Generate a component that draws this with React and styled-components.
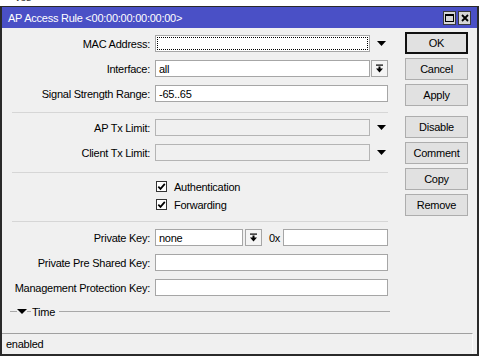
import React from "react";
import styled, { createGlobalStyle } from "styled-components";

const GlobalStyle = createGlobalStyle`
  html, body {
    margin: 0;
    padding: 0;
    background: #ffffff;
  }
  body {
    font-family: "Liberation Sans", Arial, sans-serif;
    font-size: 11px;
    letter-spacing: -0.25px;
    color: #000;
  }
`;

const Page = styled.div`
  width: 481px;
  height: 359px;
  overflow: hidden;
  background: #fff;
`;

const Backdrop = styled.div`
  height: 6px;
  overflow: hidden;
  padding-left: 15px;
`;

const BackdropText = styled.div`
  line-height: 12px;
  margin-top: -9px;
  color: #333;
`;

const Window = styled.div`
  box-sizing: border-box;
  width: 479px;
  height: 350px;
  display: flex;
  flex-direction: column;
  background: #f0f0f0;
  border: 2px solid #2a2a2a;
  border-top-width: 1px;
`;

const TitleBar = styled.div`
  height: 21px;
  flex: none;
  display: flex;
  align-items: center;
  justify-content: space-between;
  padding: 0 6px 0 6px;
  background: #4a50c6;
  color: #fff;
`;

const Title = styled.span`
  font-size: 11px;
`;

const TitleButtons = styled.div`
  display: flex;
  gap: 2px;
`;

const TitleButton = styled.div`
  box-sizing: border-box;
  width: 13px;
  height: 14px;
  display: flex;
  align-items: center;
  justify-content: center;
  background: #d6d6d6;
  border: 1px solid #3a3a3a;
`;

const Body = styled.div`
  flex: 1;
  display: flex;
`;

const Form = styled.div`
  box-sizing: border-box;
  width: 386px;
  padding-left: 10px;
  display: flex;
  flex-direction: column;
`;

const Section = styled.div`
  display: flex;
  flex-direction: column;
  gap: ${(p) => p.$gap}px;
  padding-top: ${(p) => p.$top}px;
  padding-bottom: ${(p) => p.$bottom}px;
  border-bottom: ${(p) => (p.$last ? "none" : "1px solid #d6d6d6")};
`;

const Row = styled.div`
  display: grid;
  grid-template-columns: 138px 1fr;
  column-gap: 5px;
  align-items: center;
  height: ${(p) => p.$h || 17}px;
`;

const Label = styled.span`
  text-align: right;
  white-space: nowrap;
`;

const Fields = styled.div`
  display: flex;
  align-items: center;
  height: 100%;
`;

const Input = styled.div`
  box-sizing: border-box;
  flex: ${(p) => (p.$w ? "none" : "1")};
  width: ${(p) => (p.$w ? `${p.$w}px` : "auto")};
  height: 17px;
  display: flex;
  align-items: center;
  padding: 0 3px;
  background: ${(p) => (p.$disabled ? "#f0f0f0" : "#fff")};
  border: 1px solid ${(p) => (p.$disabled ? "#b4b4b4" : "#a6a6a6")};
  outline: ${(p) => (p.$focus ? "1px dotted #000" : "none")};
  outline-offset: -3px;
  white-space: nowrap;
`;

const ArrowSlot = styled.div`
  box-sizing: border-box;
  width: 18px;
  height: 17px;
  display: flex;
  align-items: center;
  padding-left: 7px;
`;

const ComboButton = styled.div`
  box-sizing: border-box;
  flex: none;
  width: 17px;
  height: 17px;
  margin-left: ${(p) => p.$ml || 1}px;
  display: flex;
  align-items: center;
  justify-content: center;
  background: #f4f4f4;
  border: 1px solid #a6a6a6;
`;

const Hex = styled.span`
  margin: 0 3px 0 7px;
`;

const Check = styled.div`
  display: flex;
  align-items: center;
  gap: 7px;
  padding-left: 1px;
`;

const Box = styled.span`
  box-sizing: border-box;
  width: 11px;
  height: 11px;
  display: flex;
  align-items: center;
  justify-content: center;
  background: #fff;
  border: 1px solid #333;
`;

const TimeRow = styled.div`
  display: flex;
  align-items: center;
  height: 13px;
  margin: 9px -2px 0 -2px;
`;

const Rule = styled.span`
  height: 1px;
  background: #a8a8a8;
  flex: ${(p) => (p.$w ? "none" : "1")};
  width: ${(p) => (p.$w ? `${p.$w}px` : "auto")};
`;

const TimeText = styled.span`
  margin: 0 4px 0 1px;
`;

const Actions = styled.div`
  margin-left: 17px;
  padding-top: 4px;
  width: 63px;
  display: flex;
  flex-direction: column;
  gap: 4px;
`;

const Button = styled.div`
  box-sizing: border-box;
  height: 22px;
  display: flex;
  align-items: center;
  justify-content: center;
  background: #e1e1e1;
  border: 1px solid ${(p) => (p.$default ? "#111" : "#adadad")};
  box-shadow: ${(p) => (p.$default ? "inset 0 0 0 1px #111" : "none")};
  margin-top: ${(p) => p.$mt || 0}px;
`;

const StatusBar = styled.div`
  box-sizing: border-box;
  height: 21px;
  flex: none;
  margin-right: 4px;
  display: flex;
  align-items: center;
  padding-left: 4px;
  border-top: 1px solid #a0a0a0;
  border-right: 1px solid #fafafa;
`;

const DropArrow = () => (
  <svg width="9" height="5" viewBox="0 0 9 5">
    <polygon points="0,0 9,0 4.5,5" fill="#000" />
  </svg>
);

const BarArrow = () => (
  <svg width="9" height="9" viewBox="0 0 9 9">
    <rect x="1" y="0.5" width="7" height="1.2" fill="#000" />
    <rect x="3.5" y="2.5" width="2" height="2.5" fill="#000" />
    <polygon points="1,4.5 8,4.5 4.5,8.5" fill="#000" />
  </svg>
);

const CheckMark = () => (
  <svg width="9" height="9" viewBox="0 0 9 9">
    <path d="M1.3 4.6 L3.5 6.9 L7.8 1.9" stroke="#000" strokeWidth="1.7" fill="none" />
  </svg>
);

const MaxIcon = () => (
  <svg width="9" height="8" viewBox="0 0 9 8">
    <rect x="0.5" y="0.5" width="8" height="7" fill="none" stroke="#000" strokeWidth="1" />
    <rect x="0" y="0" width="9" height="2" fill="#000" />
  </svg>
);

const CloseIcon = () => (
  <svg width="8" height="8" viewBox="0 0 8 8">
    <path d="M1 1 L7 7 M7 1 L1 7" stroke="#000" strokeWidth="1.8" />
  </svg>
);

const CheckRow = ({ label }) => (
  <Row $h={13}>
    <span />
    <Check>
      <Box>
        <CheckMark />
      </Box>
      <span>{label}</span>
    </Check>
  </Row>
);

export default function App() {
  return (
    <>
      <GlobalStyle />
      <Page>
        <Backdrop>
          <BackdropText>ves</BackdropText>
        </Backdrop>
        <Window>
          <TitleBar>
            <Title>AP Access Rule &lt;00:00:00:00:00:00&gt;</Title>
            <TitleButtons>
              <TitleButton>
                <MaxIcon />
              </TitleButton>
              <TitleButton>
                <CloseIcon />
              </TitleButton>
            </TitleButtons>
          </TitleBar>
          <Body>
            <Form>
              <Section $top={7} $bottom={10} $gap={8}>
                <Row>
                  <Label>MAC Address:</Label>
                  <Fields>
                    <Input $focus />
                    <ArrowSlot>
                      <DropArrow />
                    </ArrowSlot>
                  </Fields>
                </Row>
                <Row>
                  <Label>Interface:</Label>
                  <Fields>
                    <Input>all</Input>
                    <ComboButton>
                      <BarArrow />
                    </ComboButton>
                  </Fields>
                </Row>
                <Row>
                  <Label>Signal Strength Range:</Label>
                  <Fields>
                    <Input>-65..65</Input>
                  </Fields>
                </Row>
              </Section>
              <Section $top={6} $bottom={11} $gap={8}>
                <Row>
                  <Label>AP Tx Limit:</Label>
                  <Fields>
                    <Input $disabled />
                    <ArrowSlot>
                      <DropArrow />
                    </ArrowSlot>
                  </Fields>
                </Row>
                <Row>
                  <Label>Client Tx Limit:</Label>
                  <Fields>
                    <Input $disabled />
                    <ArrowSlot>
                      <DropArrow />
                    </ArrowSlot>
                  </Fields>
                </Row>
              </Section>
              <Section $top={7} $bottom={10} $gap={5}>
                <CheckRow label="Authentication" />
                <CheckRow label="Forwarding" />
              </Section>
              <Section $top={7} $bottom={0} $gap={8} $last>
                <Row>
                  <Label>Private Key:</Label>
                  <Fields>
                    <Input $w={88}>none</Input>
                    <ComboButton $ml={2}>
                      <BarArrow />
                    </ComboButton>
                    <Hex>0x</Hex>
                    <Input />
                  </Fields>
                </Row>
                <Row>
                  <Label>Private Pre Shared Key:</Label>
                  <Fields>
                    <Input />
                  </Fields>
                </Row>
                <Row>
                  <Label>Management Protection Key:</Label>
                  <Fields>
                    <Input />
                  </Fields>
                </Row>
              </Section>
              <TimeRow>
                <Rule $w={7} />
                <svg width="10" height="5" viewBox="0 0 10 5">
                  <polygon points="0,0 10,0 5,5" fill="#000" />
                </svg>
                <Rule $w={4} />
                <TimeText>Time</TimeText>
                <Rule />
              </TimeRow>
            </Form>
            <Actions>
              <Button $default>OK</Button>
              <Button>Cancel</Button>
              <Button>Apply</Button>
              <Button $mt={6}>Disable</Button>
              <Button>Comment</Button>
              <Button>Copy</Button>
              <Button>Remove</Button>
            </Actions>
          </Body>
          <StatusBar>enabled</StatusBar>
        </Window>
      </Page>
    </>
  );
}
